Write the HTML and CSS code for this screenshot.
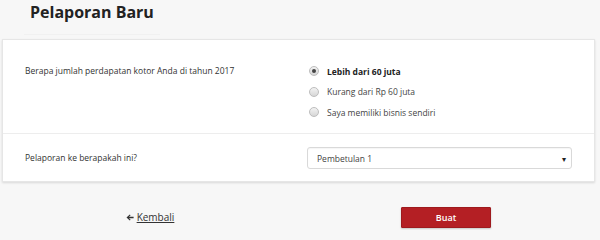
FILE: index.html
```html
<!DOCTYPE html>
<html lang="id">
<head>
<meta charset="utf-8">
<title>Pelaporan Baru</title>
<link rel="stylesheet" href="styles.css">
</head>
<body>
<header class="page-head">
  <h1 class="title">Pelaporan Baru</h1>
</header>
<section class="card">
  <div class="row row-first">
    <div class="label">Berapa jumlah perdapatan kotor Anda di tahun 2017</div>
    <div class="field radios">
      <div class="radio checked"><span class="dot"></span><span class="rtext bold">Lebih dari 60 juta</span></div>
      <div class="radio"><span class="dot"></span><span class="rtext">Kurang dari Rp 60 juta</span></div>
      <div class="radio"><span class="dot"></span><span class="rtext">Saya memiliki bisnis sendiri</span></div>
    </div>
  </div>
  <div class="row row-second">
    <div class="label">Pelaporan ke berapakah ini?</div>
    <div class="field">
      <div class="select"><span>Pembetulan 1</span><span class="caret">▾</span></div>
    </div>
  </div>
</section>
<footer class="actions">
  <div class="act"><a class="back" href="#"><svg class="arrow" width="8" height="7" viewBox="0 0 8 7"><path d="M0.5 3.5 L3.8 0.4 L4.6 1.2 L3 2.8 H7.6 V4.2 H3 L4.6 5.8 L3.8 6.6 Z" fill="#333"/></svg><span class="back-text">Kembali</span></a></div>
  <div class="act"><button class="btn" type="button">Buat</button></div>
</footer>
</body>
</html>
```

FILE: styles.css
```css
* { box-sizing: border-box; }
html, body { margin: 0; padding: 0; }
body {
  background: #f7f7f7;
  font-family: "Open Sans", "Liberation Sans", sans-serif;
  color: #333;
  width: 600px;
  height: 230px;
  overflow: hidden;
}
.page-head {
  height: 39px;
  padding: 0 0 0 24px;
}
.title {
  margin: 0;
  display: inline-block;
  font-size: 16px;
  font-weight: 700;
  color: #222;
  line-height: 20px;
  padding: 2px 6px 12px 6px;
  border-bottom: 1px solid #f1f1f1;
}
.card {
  margin: 0 5px 0 2px;
  background: #fff;
  border: 1px solid #e6e6e6;
  box-shadow: 0 1px 2px rgba(0,0,0,0.12);
  height: 143px;
}
.row {
  display: grid;
  grid-template-columns: 282px 265px;
  padding-left: 22px;
}
.row-first {
  height: 94px;
  padding-top: 21px;
  border-bottom: 1px solid #ededed;
}
.row-second {
  padding-top: 13px;
}
.label {
  font-size: 8.5px;
  line-height: 20px;
  color: #333;
}
.row-second .label { padding-top: 1px; }
.radios {
  display: flex;
  flex-direction: column;
  padding-left: 2px;
}
.radio {
  display: flex;
  align-items: center;
  height: 20.5px;
  font-size: 8.5px;
  color: #444;
}
.dot {
  width: 10px;
  height: 10px;
  border-radius: 50%;
  border: 1px solid #bdbdbd;
  background: linear-gradient(#f2f2f2, #d6d6d6);
  margin-right: 8px;
  position: relative;
}
.checked .dot::after {
  content: "";
  position: absolute;
  left: 2px;
  top: 2px;
  width: 4px;
  height: 4px;
  border-radius: 50%;
  background: #444;
}
.bold { font-weight: 700; color: #222; }
.select {
  height: 22px;
  border: 1px solid #d9d9d9;
  border-radius: 3px;
  display: flex;
  align-items: center;
  justify-content: space-between;
  padding: 0 5px 0 9px;
  font-size: 8.5px;
  color: #444;
  box-shadow: inset 0 1px 1px rgba(0,0,0,0.04);
}
.caret { font-size: 8px; color: #222; }
.actions {
  display: grid;
  grid-template-columns: 296px 300px;
  padding-top: 24px;
}
.act {
  display: flex;
  justify-content: center;
  align-items: center;
  height: 22px;
}
.back {
  color: #333;
  font-size: 10px;
  text-decoration: none;
  display: flex;
  align-items: center;
  gap: 3px;
  margin-left: 4px;
}
.arrow { display: block; }
.back-text { text-decoration: underline; }
.btn {
  width: 90px;
  height: 21px;
  background: #b41f24;
  border: 1px solid #9e1a1e;
  border-radius: 1px;
  color: #fff;
  font-family: "Open Sans", "Liberation Sans", sans-serif;
  font-size: 9px;
  font-weight: 600;
  padding: 0;
  box-shadow: 0 1px 2px rgba(0,0,0,0.2);
}
```
